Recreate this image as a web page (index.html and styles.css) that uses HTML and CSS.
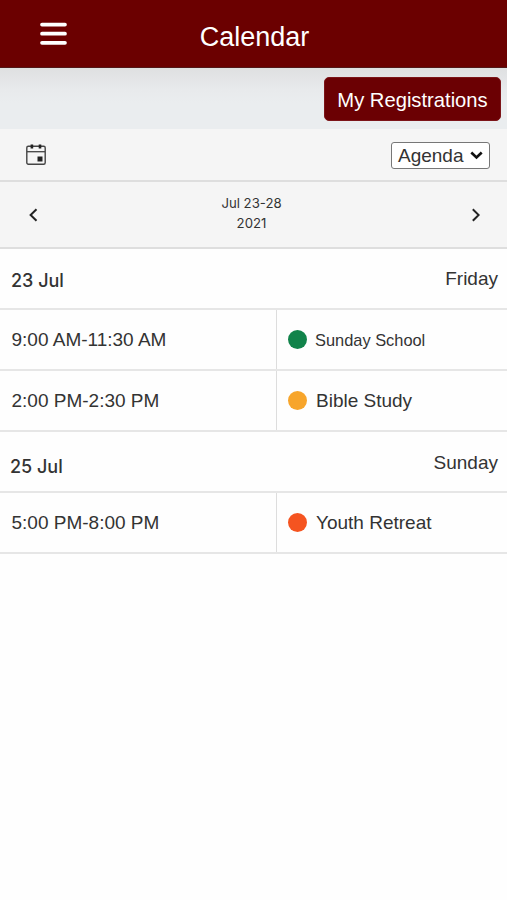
FILE: index.html
```html
<!DOCTYPE html>
<html lang="en">
<head>
<meta charset="utf-8">
<meta name="viewport" content="width=device-width, initial-scale=1">
<title>Calendar</title>
<link rel="stylesheet" href="styles.css">
</head>
<body>
<header class="topbar">
  <svg class="menu" width="27" height="24" viewBox="0 0 27 24"><path d="M2 2.6h23M2 11.7h23M2 20.8h23" stroke="#fff" stroke-width="3.7" stroke-linecap="round"/></svg>
  <h1 class="title">Calendar</h1>
  <span></span>
</header>
<div class="actions"><button class="register">My Registrations</button></div>
<div class="toolbar">
  <svg width="20" height="22" viewBox="0 0 20 22"><rect x=".8" y="2.2" width="18.4" height="18" rx="1.5" fill="none" stroke="#444" stroke-width="1.4"/><path d="M1 7.7h18" stroke="#444" stroke-width="1.3"/><path d="M5.9 .4v4M14 .4v4" stroke="#222" stroke-width="2.6"/><path d="M11.5 12.5h5v5h-5z" fill="#222"/></svg>
  <div class="view">Agenda<svg width="13" height="9" viewBox="0 0 13 9"><path d="M1.3 1.5 6.5 6.5l5.2-5" fill="none" stroke="#111" stroke-width="2.6"/></svg></div>
</div>
<nav class="range">
  <svg width="9" height="14" viewBox="0 0 9 14"><path d="M7.5 1.2 1.6 7l5.9 5.8" fill="none" stroke="#222" stroke-width="2"/></svg>
  <div class="dates">Jul 23-28<br>2021</div>
  <svg width="9" height="14" viewBox="0 0 9 14"><path d="M1.8 1.2 7.7 7l-5.9 5.8" fill="none" stroke="#222" stroke-width="2"/></svg>
</nav>
<main>
  <div class="day"><h2 class="date">23 Jul</h2><span class="weekday">Friday</span></div>
  <div class="event"><div class="time">9:00 AM-11:30 AM</div><div class="name small"><i class="dot green"></i>Sunday School</div></div>
  <div class="event"><div class="time">2:00 PM-2:30 PM</div><div class="name"><i class="dot amber"></i>Bible Study</div></div>
  <div class="day second"><h2 class="date">25 Jul</h2><span class="weekday">Sunday</span></div>
  <div class="event"><div class="time">5:00 PM-8:00 PM</div><div class="name"><i class="dot orange"></i>Youth Retreat</div></div>
</main>
</body>
</html>
```
FILE: styles.css
```css
* { box-sizing: border-box; }
body {
  margin: 0;
  background: #fefefe;
  color: #333;
  font: 19px/24px "Liberation Sans", Arial, sans-serif;
}
svg { display: block; }
.topbar {
  display: grid;
  grid-template-columns: 1fr auto 1fr;
  height: 68px;
  padding: 3px 0 0 40px;
  align-items: center;
  background: #6b0000;
  border-bottom: 1px solid #521818;
}
.menu { margin-top: -3px; }
.title {
  margin: 4px 38px 0 0;
  color: #fff;
  font-size: 27px;
  line-height: 32px;
  font-weight: 400;
}
.actions {
  display: flex;
  justify-content: flex-end;
  height: 61px;
  padding: 9px 6px 0 0;
  background: linear-gradient(#dfe0e1, #e8eaec 22px, #eaedef 35px);
}
.register {
  width: 177px;
  height: 44px;
  padding: 1px 0 0;
  border: 1px solid #7c1519;
  border-radius: 5px;
  background: #6b0003;
  color: #fff;
  font: 20.2px/24px "Liberation Sans", Arial, sans-serif;
  white-space: nowrap;
}
.toolbar {
  display: flex;
  justify-content: space-between;
  align-items: center;
  height: 53px;
  padding: 0 17px 0 26px;
  border-bottom: 2px solid #dedede;
  background: #f5f5f5;
}
.view {
  display: flex;
  align-items: center;
  justify-content: space-between;
  width: 99px;
  height: 27px;
  margin-top: 1px;
  padding: 1px 6px 0;
  border: 1px solid #777;
  border-radius: 3px;
  background: #fff;
}
.range {
  display: flex;
  justify-content: space-between;
  align-items: center;
  height: 67px;
  padding: 0 27px 0 29px;
  border-bottom: 2px solid #dedede;
  background: #f5f5f5;
}
.dates {
  margin-right: 6px;
  padding-bottom: 4px;
  font: 13.2px/20px Inter, sans-serif;
  text-align: center;
}
.day {
  display: flex;
  justify-content: space-between;
  align-items: center;
  height: 61px;
  padding: 5px 9px 0 11px;
  border-bottom: 2px solid #e6e6e6;
}
.date { margin: 0; font: 500 18px/24px Inter, sans-serif; }
.weekday { margin-top: -5px; }
.second { padding: 11px 9px 0 10px; }
.second .weekday { margin-top: -9px; }
.event {
  display: grid;
  grid-template-columns: 277px 1fr;
  height: 61px;
  border-bottom: 2px solid #e6e6e6;
}
.time, .name { display: flex; align-items: center; padding-top: 1px; }
.time { padding-left: 11.5px; border-right: 1px solid #ddd; }
.name { padding-left: 11px; gap: 9px; }
.small { gap: 8px; padding-top: 0; font-size: 16.4px; }
.dot { width: 19px; height: 19px; margin-top: -1px; border-radius: 50%; }
.green { background: #11834a; }
.amber { background: #f7a52b; }
.orange { background: #f55420; }
```
